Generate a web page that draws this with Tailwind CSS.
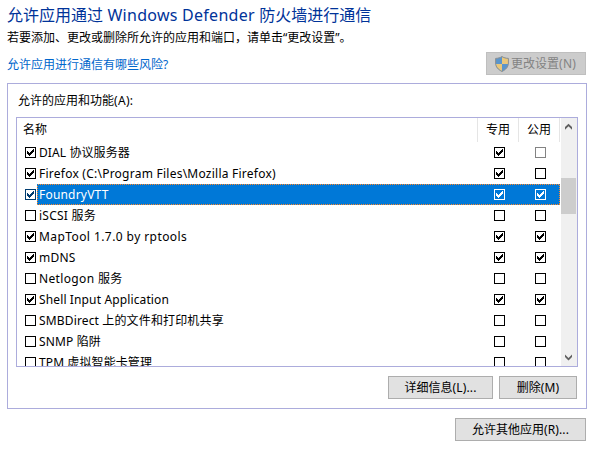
<!DOCTYPE html>
<html lang="zh-CN">
<head>
<meta charset="utf-8">
<title>允许的应用</title>
<script src="https://cdn.jsdelivr.net/npm/@tailwindcss/browser@4"></script>
</head>
<body class="w-[600px] h-[460px] overflow-hidden bg-white text-black text-[12px] leading-[21px] font-['Noto_Sans','Noto_Sans_CJK_SC',sans-serif]">
<svg class="hidden">
  <symbol id="off" viewBox="0 0 11 11"><path d="M.5.5h10v10H.5z" fill="none" stroke="currentColor"/></symbol>
  <symbol id="on" viewBox="0 0 11 11"><path d="M.5.5h10v10H.5z" fill="none" stroke="currentColor"/><path fill="currentColor" d="M2 4h1v1h1v1h1v-1h1v-1h1v-1h1v-1h1v3h-1v1h-1v1h-1v1h-1v1h-1v-1h-1v-1h-1z"/></symbol>
</svg>
<div class="flex flex-col h-[460px] pl-[7px] pr-[13px]">
  <h1 class="h-[28px] shrink-0 pt-[1px] text-[16px] leading-[28px] text-[#003399] whitespace-pre"><span>允许应用通过</span><span class="tracking-[0.27px]"> Windows Defender </span><span>防火墙进行通信</span></h1>
  <p class="h-[20px] shrink-0 leading-[20px] whitespace-nowrap">若要添加、更改或删除所允许的应用和端口，请单击“更改设置”。</p>
  <div class="flex shrink-0 justify-between h-[35px] pr-[1px]">
    <a class="pt-[7px] leading-[20px] text-[#0066cc]">允许应用进行通信有哪些风险?</a>
    <button class="mt-[4px] w-[100px] h-[23px] flex items-center border border-[#bfbfbf] bg-[#cccccc] text-[#838383] pl-[8px] gap-[2px] whitespace-nowrap">
      <svg class="w-[14px] h-[16px] shrink-0" viewBox="0 0 14 16"><path d="M7 .5C5.500 1.700 3 2.300.6 2.400V7c0 4 2.600 6.600 6.400 8.500 3.800-1.900 6.400-4.500 6.400-8.500V2.400C11 2.300 8.500 1.700 7 .5z" fill="#5b95cb"/><path d="M7 .8V8h6.300c.1-.4.1-.6.1-1V2.400C11 2.300 8.500 1.900 7 .8zM.8 8H7v7.300C3.500 13.500 1.200 11.300.8 8z" fill="#e9c77b"/><path d="M7 .5C5.500 1.700 3 2.300.6 2.400V7c0 4 2.600 6.600 6.400 8.500 3.800-1.900 6.400-4.500 6.400-8.500V2.400C11 2.300 8.500 1.700 7 .5z" fill="none" stroke="#8d8f8f"/></svg>
      <span>更改设置<span class="tracking-[0.3px]">(N)</span></span>
    </button>
  </div>
  <section class="w-[580px] h-[326px] shrink-0 border border-[#acacdc] px-[8px] pt-[6px]">
    <div class="h-[27px] pl-[2px] leading-[22px]">允许的应用和功能<span class="tracking-[0.3px]">(A):</span></div>
    <div class="w-[562px] h-[250px] border border-[#acacdc] flex overflow-hidden">
      <div class="w-[544px] flex flex-col">
        <div class="flex h-[24px] shrink-0 leading-[23px]">
          <div class="w-[461px] border-r border-[#e5e5e5] pl-[6px]">名称</div>
          <div class="w-[41px] border-r border-[#e5e5e5] pl-[8px]">专用</div>
          <div class="w-[41px] border-r border-[#e5e5e5] pl-[8px]">公用</div>
        </div>
        <div id="rows" class="flex flex-col"></div>
      </div>
      <div class="w-[16px] h-full bg-[#f0f0f0] flex flex-col items-start">
        <svg class="w-[15px] h-[17px] shrink-0" viewBox="0 0 15 17"><path d="M4 11.700V9.100L7.500 5.700 11 9.100v2.600L7.500 8.300z" fill="#606060"/></svg>
        <div class="mt-[43px] w-[15px] h-[36px] bg-[#cdcdcd]"></div>
        <svg class="mt-auto w-[15px] h-[17px] shrink-0" viewBox="0 0 15 17"><path d="M4 5.500v2.600L7.500 11.500 11 8.100V5.500L7.500 8.900z" fill="#606060"/></svg>
      </div>
    </div>
    <div class="flex justify-end gap-[6px] pt-[9px] pr-[1px]">
      <button class="w-[105px] h-[23px] border border-[#adadad] bg-[#e1e1e1]">详细信息<span class="tracking-[0.15px]">(L)...</span></button>
      <button class="w-[78px] h-[23px] border border-[#adadad] bg-[#e1e1e1]">删除<span class="tracking-[0.15px]">(M)</span></button>
    </div>
  </section>
  <button class="self-end shrink-0 mt-[9px] mr-[1px] w-[131px] h-[23px] border border-[#adadad] bg-[#e1e1e1]">允许其他应用<span class="tracking-[0.15px]">(R)...</span></button>
</div>
<script>
// name, enabled, private, public, letter spacing, state
const rows = [
  ['DIAL 协议服务器', 1, 1, 0, .1, 'gray'],
  ['Firefox (C:\\Program Files\\Mozilla Firefox)', 1, 1, 0, .24],
  ['FoundryVTT', 1, 1, 1, .2, 'selected'],
  ['iSCSI 服务', 0, 0, 0, .25],
  ['MapTool 1.7.0 by rptools', 1, 1, 1, .42],
  ['mDNS', 1, 1, 1, .25],
  ['Netlogon 服务', 0, 0, 0, .35],
  ['Shell Input Application', 1, 1, 1, .13],
  ['SMBDirect 上的文件和打印机共享', 0, 0, 0, .15],
  ['SNMP 陷阱', 0, 0, 0, .15],
  ['TPM 虚拟智能卡管理', 0, 0, 0, .1],
];
const box = (on, cls) => `<svg class="w-[11px] h-[11px] shrink-0 ${cls}" shape-rendering="crispEdges"><use href="#${on ? 'on' : 'off'}"/></svg>`;
document.getElementById('rows').innerHTML = rows.map(([name, a, b, c, ls, state]) => {
  const sel = state === 'selected';
  return `<div class="flex h-[21px] shrink-0 pl-[8px]">
    <div class="w-[12px] pt-[5px]">${box(a, sel ? 'text-[#003c70]' : '')}</div>
    <div class="relative flex w-[523px] h-[21px] pl-[2px] ${sel ? 'bg-[#0078d7] text-white' : ''}">
      ${sel ? '<svg class="absolute left-0 top-0 w-[523px] h-[21px]" shape-rendering="crispEdges"><path d="M.5.5h522v20H.5z" fill="none" stroke="#ff8728" stroke-dasharray="1 1"/></svg>' : ''}
      <span class="w-[455px] leading-[21px]" style="letter-spacing:${ls}px">${name}</span>
      <div class="flex gap-[30px] pt-[5px]">${box(b, '')}${box(c, state === 'gray' ? 'text-[#838383]' : '')}</div>
    </div>
  </div>`;
}).join('');
</script>
</body>
</html>
